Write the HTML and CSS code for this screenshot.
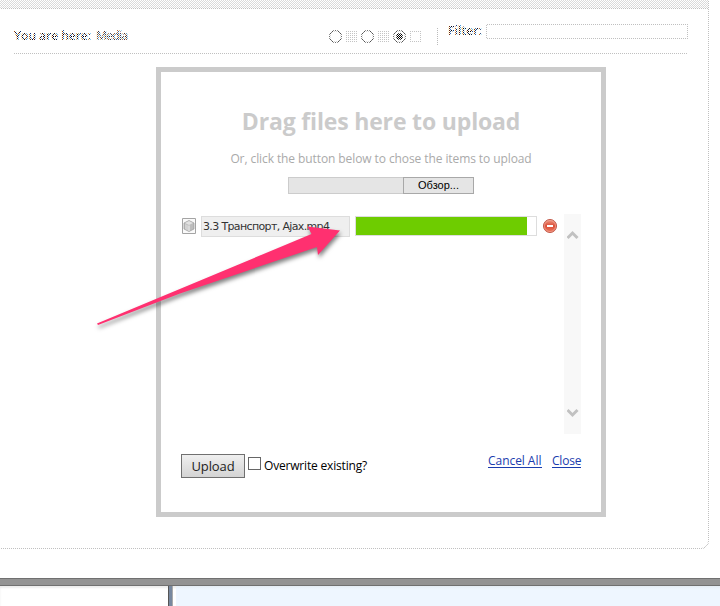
FILE: index.html
```html
<!DOCTYPE html>
<html lang="en">
<head>
<meta charset="utf-8">
<title>Media upload</title>
<link rel="stylesheet" href="styles.css">
</head>
<body>
<main class="panel">
  <div class="strip"></div>
  <header class="bar">
    <div class="crumbs"><span class="here">You are here:</span><span class="media">Media</span></div>
    <div class="views">
      <i class="radio"></i><i class="swatch"></i>
      <i class="radio"></i><i class="swatch"></i>
      <i class="radio on"></i><i class="swatch empty"></i>
    </div>
    <div class="divider"></div>
    <label class="filter">Filter:</label>
    <div class="search"></div>
  </header>
</main>

<section class="dialog">
  <h1><span>Drag files here to upload</span></h1>
  <p class="hint"><span>Or, click the button below to chose the items to upload</span></p>
  <div class="browse"><div class="path"></div><button class="pick">Обзор...</button></div>
  <div class="queue">
    <div class="item">
      <svg class="thumb" width="14" height="16" viewBox="0 0 14 16">
        <path d="M.5.5h13v15H.5z" fill="#fafafa" stroke="#a4a4a4"/>
        <path d="M7 2.500l5 2.500v6l-5 2.500L2 11V5z" fill="#bdbdbd" stroke="#999" stroke-width=".7"/>
        <path d="M7 3l4 2-4 2-4-2z" fill="#e2e2e2"/><path d="M3 6l3 1.500v5L3 11z" fill="#d2d2d2"/>
        <path d="M7 7.500v5.500" stroke="#f7f7f7" fill="none"/>
      </svg>
      <div class="name"><span>3.3 Транспорт, Ajax.mp4</span></div>
      <div class="progress"><div class="fill"></div></div>
      <svg class="remove" width="14" height="14" viewBox="0 0 14 14">
        <defs><linearGradient id="red" x2="0" y2="1"><stop stop-color="#ee9a86"/><stop offset=".5" stop-color="#dc4c35"/><stop offset="1" stop-color="#ed7a61"/></linearGradient></defs>
        <circle cx="7" cy="7" r="6.5" fill="url(#red)" stroke="#c05848"/>
        <circle cx="7" cy="7" r="5.5" fill="none" stroke="#f2a898" stroke-width=".7"/>
        <path d="M4 6h6v2H4z" fill="#fff"/>
      </svg>
    </div>
    <div class="scroll">
      <svg width="12" height="10" viewBox="0 0 12 10"><path d="M.5 8l5-5 5 5" fill="none" stroke="#c1c1c1" stroke-width="3"/></svg>
      <svg width="12" height="10" viewBox="0 0 12 10"><path d="M.5 2l5 5 5-5" fill="none" stroke="#c1c1c1" stroke-width="3"/></svg>
    </div>
  </div>
  <footer class="actions">
    <button class="upload"><span>Upload</span></button>
    <i class="check"></i>
    <span class="overwrite">Overwrite existing?</span>
    <a class="cancel">Cancel All</a>
    <a class="close">Close</a>
  </footer>
</section>

<svg class="arrow" width="270" height="130" viewBox="80 215 270 130">
  <path d="M97 323.500L311.500 234L307.500 226.500L340 230.500L318 255L317 247L180 293.500L98 325z" fill="#ff3070"/>
</svg>

<div class="splitter"></div>
<div class="below"><div class="left"></div><div class="handle"></div><div class="right"></div></div>
</body>
</html>
```
FILE: styles.css
```css
* { box-sizing: border-box; }
body {
  margin: 0; width: 720px; height: 606px; overflow: hidden; position: relative;
  background: #fff; color: #000; font: 12px/16px "Open Sans", sans-serif;
}
.panel {
  position: relative; width: 709px; height: 549px;
  border-right: 1px solid #c0c0c0; border-bottom: 1px solid #c0c0c0;
  border-bottom-right-radius: 8px;
}
/* disabled look: every second pixel is blanked */
.panel::after {
  content: ""; position: absolute; inset: 0 -1px -1px 0;
  background: repeating-conic-gradient(transparent 0 25%, #fff 0 50%) 0 0 / 2px 2px;
}
.strip { height: 9px; background: #dadada; border-bottom: 1px solid #c0c0c0; }
.bar {
  margin: 0 20px 0 14px; height: 45px; border-bottom: 1px solid #c0c0c0;
  display: flex; align-items: flex-start;
}
.crumbs { width: 315px; padding-top: 19px; font-weight: 600; white-space: nowrap; }
.here { display: inline-block; width: 82px; letter-spacing: -.02px; }
.media { color: #333; letter-spacing: -.9px; }
.views { display: flex; width: 108px; padding-top: 21px; }
.radio { width: 13px; height: 13px; border: 1px solid #444; border-radius: 50%; margin-right: 4px; }
.on { background: radial-gradient(circle, #000 0 3px, transparent 3.5px); }
.swatch {
  width: 11px; height: 11px; margin: 1px 4px 0 0;
  background: repeating-linear-gradient(90deg, #c4c4c4 0 1px, transparent 1px 2px);
}
.empty { background: none; border: 1px solid #c4c4c4; }
.divider { width: 1px; height: 17px; margin-top: 19px; background: #bbb; }
.filter { width: 48px; padding: 14px 0 0 10px; font-weight: 600; letter-spacing: .1px; }
.search { flex: 1; height: 15px; margin-top: 15px; border: 1px solid #c0c0c0; }

.dialog {
  position: absolute; left: 156px; top: 67px; width: 450px; height: 450px;
  border: 5px solid #cbcbcb; background: #fff; padding: 33px 20px 0;
}
h1 {
  margin: 0; height: 32px; text-align: center; white-space: nowrap;
  font: 700 23px/32px "Open Sans", sans-serif; color: #cbcbcb; letter-spacing: -.17px;
}
.hint { margin: 14px 0 0; height: 16px; text-align: center; color: #aaa; white-space: nowrap; letter-spacing: -.09px; }
.browse { display: flex; margin: 10px 0 0 107px; height: 17px; }
.path { width: 115px; border: 1px solid #ccc; border-right: 0; background: #e5e5e5; }
.pick {
  width: 71px; padding: 0; border: 1px solid #a8a8a8; background: #e5e5e5;
  font: 11px/13px "Liberation Sans", sans-serif;
}
.queue { display: flex; justify-content: space-between; height: 220px; margin-top: 20px; }
.item { display: flex; align-items: flex-start; }
.thumb { margin: 4px 5px 0 1px; }
.name {
  width: 149px; height: 21px; margin-top: 2px; border: 1px solid #ddd; background: #efefef;
  font: 11px/19px "DejaVu Sans", sans-serif; color: #333; padding-left: 1px; white-space: nowrap; letter-spacing: -.64px;
}
.progress { width: 182px; height: 20px; margin: 2px 6px 0 5px; border: 1px solid #ddd; }
.fill { width: 171px; height: 18px; background: #6ecc00; }
.remove { margin-top: 5px; }
.scroll {
  width: 17px; background: #f8f8f8; display: flex; flex-direction: column;
  align-items: center; justify-content: space-between; padding: 16px 0;
}
.actions { display: flex; align-items: flex-start; height: 24px; margin-top: 20px; white-space: nowrap; }
.upload {
  width: 64px; height: 24px; padding: 0; border: 1px solid #707070; color: #222;
  background: linear-gradient(#efefef, #d4d4d4); font: 13px/20px "Open Sans", sans-serif; letter-spacing: -.1px;
}
.check { width: 13px; height: 13px; margin: 3px 3px 0; border: 1px solid #666; }
.overwrite { width: 224px; margin-top: 4px; letter-spacing: -.18px; }
.cancel, .close { height: 14px; color: #1a3cae; border-bottom: 1px solid #1a3cae; line-height: 14px; }
.cancel { width: 54px; margin-right: 10px; letter-spacing: -.05px; }
.close { width: 29px; letter-spacing: -.2px; }

.arrow { position: absolute; left: 80px; top: 215px; filter: drop-shadow(1px 3px 2px rgba(0, 0, 0, .5)); }
.splitter {
  height: 8px; margin-top: 29px; background: #939393;
  border-top: 1px solid #707070; border-bottom: 1px solid #707070;
}
.below { display: flex; height: 20px; box-shadow: inset 0 2px 2px rgba(0, 0, 0, .08); }
.left { width: 168px; }
.handle { width: 5px; background: #78889f; border-left: 1px solid #555; border-right: 1px solid #aaa; }
.right { flex: 1; margin-left: 3px; background: linear-gradient(#e5edf5, #eef6ff 3px); }
```
